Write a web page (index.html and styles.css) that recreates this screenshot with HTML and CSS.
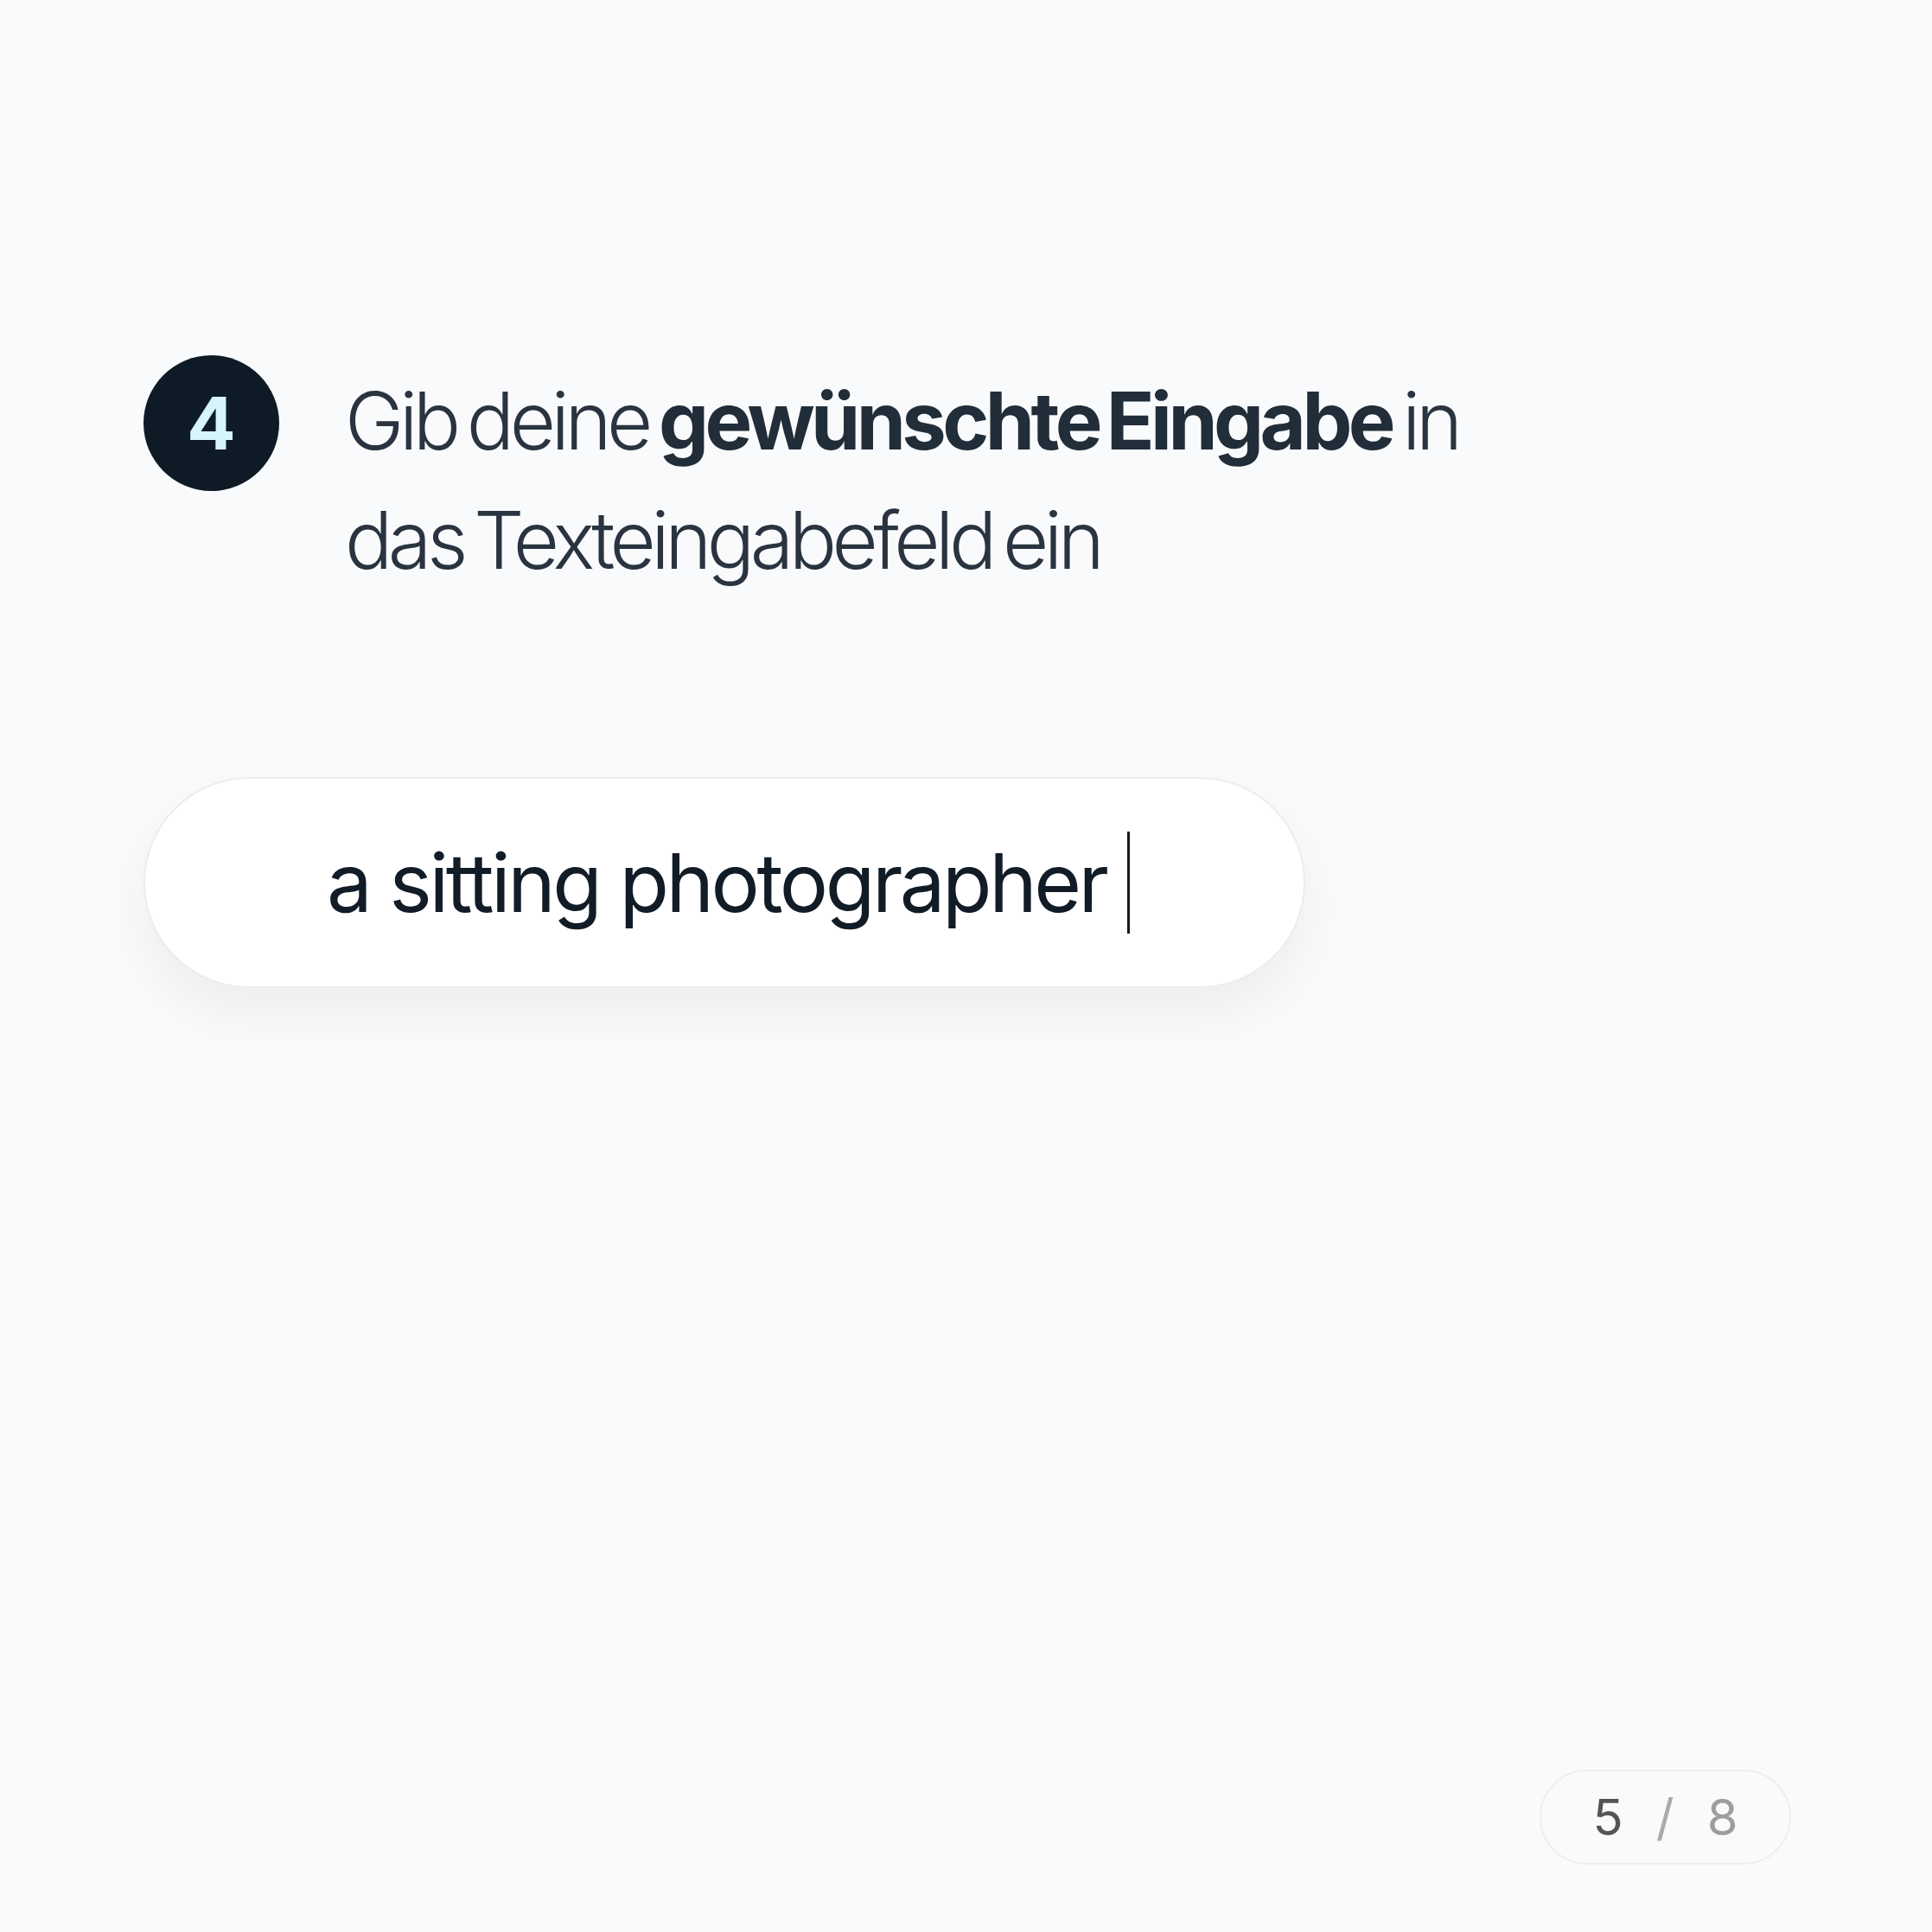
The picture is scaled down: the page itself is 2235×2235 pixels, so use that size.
FILE: index.html
```html
<!DOCTYPE html>
<html lang="de">
<head>
    <meta charset="UTF-8">
    <meta name="viewport" content="width=device-width, initial-scale=1.0">
    <title>Schritt 4</title>
    <link rel="stylesheet" href="styles.css">
</head>
<body>

    <div class="page">

        <!-- Schritt -->
        <div class="step">
            <div class="step-number">4</div>
            <p class="step-text">Gib deine <b>gewünschte Eingabe</b> in<br>das Texteingabefeld ein</p>
        </div>

        <!-- Eingabefeld -->
        <div class="prompt">
            <span class="prompt-text">a sitting photographer</span><span class="caret"></span>
        </div>

        <!-- Seitenzahl -->
        <div class="pager-row">
            <div class="pager">
                <span class="current">5</span>
                <span class="slash">/</span>
                <span class="total">8</span>
            </div>
        </div>

    </div>

</body>
</html>
```

FILE: styles.css
```css
body {
    margin: 0;
    background-color: #f9fafb;
    font-family: Inter, "Liberation Sans", sans-serif;
}

.page {
    min-height: 2235px;
    box-sizing: border-box;
    padding: 411px 163px 78px 166px;
    display: flex;
    flex-direction: column;
}

.step {
    display: flex;
    align-items: flex-start;
    gap: 76px;
}

.step-number {
    width: 157px;
    height: 157px;
    border-radius: 50%;
    background-color: #0e1b26;
    color: #d6f4fb;
    font-size: 84px;
    font-weight: 700;
    display: flex;
    align-items: center;
    justify-content: center;
    flex-shrink: 0;
}

.step-text {
    margin: 7px 0 0 0;
    font-size: 92px;
    line-height: 138px;
    font-weight: 300;
    letter-spacing: -0.06em;
    word-spacing: -0.09em;
    color: #2a3441;
}

.step-text b {
    font-weight: 700;
    color: #222d3a;
    letter-spacing: -0.05em;
}

.prompt {
    margin-top: 205px;
    width: 1344px;
    height: 244px;
    box-sizing: border-box;
    border: 2px solid #ededed;
    border-radius: 122px;
    background-color: #ffffff;
    box-shadow: 0 30px 60px rgba(0, 0, 0, 0.05);
    display: flex;
    align-items: center;
    padding-left: 210px;
}

.prompt-text {
    font-size: 94px;
    line-height: 1;
    letter-spacing: -0.037em;
    color: #111c27;
}

.caret {
    width: 3px;
    height: 118px;
    margin-left: 24px;
    background-color: #111c27;
}

.pager-row {
    margin-top: auto;
    display: flex;
    justify-content: flex-end;
}

.pager {
    width: 291px;
    height: 110px;
    box-sizing: border-box;
    border: 2px solid #eeeeee;
    border-radius: 55px;
    background-color: #fafafa;
    display: flex;
    align-items: center;
    justify-content: center;
    gap: 38px;
    font-size: 58px;
    color: #555555;
}

.pager .slash {
    color: #aaaaaa;
}

.pager .total {
    color: #9d9d9d;
}
```
